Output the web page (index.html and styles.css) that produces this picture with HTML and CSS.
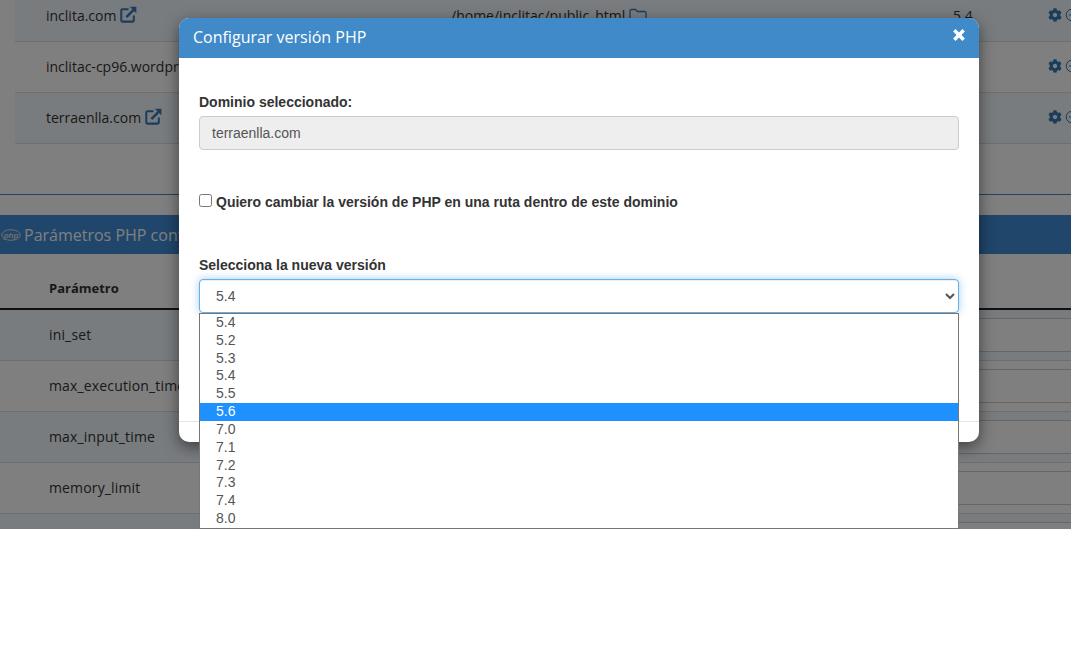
FILE: index.html
```html
<!DOCTYPE html>
<html lang="en">

<head>
    <meta charset="UTF-8">
    <meta name="viewport" content="width=device-width, initial-scale=1.0">
    <title>Configurar versión PHP</title>
    <link rel="stylesheet" href="styles.css">
</head>

<body>
    <svg class="defs" width="0" height="0">
        <symbol id="gear" viewBox="0 0 512 512">
            <path d="M487.4 315.7l-42.6-24.6c4.3-23.2 4.3-47 0-70.2l42.6-24.6c4.9-2.8 7.1-8.6 5.5-14-11.1-35.6-30-67.8-54.7-94.6-3.8-4.1-10-5.1-14.8-2.3L380.8 110c-17.9-15.4-38.5-27.3-60.8-35.1V25.8c0-5.6-3.9-10.5-9.4-11.7-36.7-8.2-74.3-7.8-109.2 0-5.5 1.2-9.4 6.1-9.4 11.7V75c-22.2 7.9-42.8 19.8-60.8 35.1L88.7 85.5c-4.9-2.8-11-1.9-14.8 2.3-24.7 26.7-43.6 58.9-54.7 94.6-1.7 5.4.6 11.2 5.5 14L67.3 221c-4.3 23.2-4.3 47 0 70.2l-42.6 24.6c-4.9 2.8-7.1 8.6-5.5 14 11.1 35.6 30 67.8 54.7 94.6 3.8 4.1 10 5.1 14.8 2.3l42.6-24.6c17.9 15.4 38.5 27.3 60.8 35.1v49.2c0 5.6 3.9 10.5 9.4 11.7 36.7 8.2 74.3 7.8 109.2 0 5.5-1.2 9.4-6.1 9.4-11.7v-49.2c22.2-7.9 42.8-19.8 60.8-35.1l42.6 24.6c4.9 2.8 11 1.9 14.8-2.3 24.7-26.7 43.6-58.9 54.7-94.6 1.5-5.5-.7-11.3-5.6-14.1zM256 336c-44.1 0-80-35.9-80-80s35.9-80 80-80 80 35.9 80 80-35.9 80-80 80z" fill="currentColor"/>
        </symbol>
        <symbol id="link" viewBox="0 0 16 16">
            <path d="M8 3H2.5A1.2 1.2 0 0 0 1.2 4.2v9.3a1.2 1.2 0 0 0 1.3 1.2h9.3a1.2 1.2 0 0 0 1.2-1.2V9" fill="none" stroke="currentColor" stroke-width="1.9"/>
            <path d="M6 10.5 13.5 3" fill="none" stroke="currentColor" stroke-width="2.4"/>
            <path d="M9.2 .6h6.2v6.2z" fill="currentColor"/>
        </symbol>
        <symbol id="circle" viewBox="0 0 14 14">
            <circle cx="7" cy="7" r="5.8" fill="none" stroke="currentColor" stroke-width="1"/>
            <path d="M4 7h6" stroke="currentColor" stroke-width="1"/>
        </symbol>
    </svg>

    <div class="page">
        <div class="sheet">
            <div class="domains">
                <div class="domain striped">
                    <div>inclita.com <svg class="icon-link"><use href="#link"/></svg></div>
                    <div>/home/inclitac/public_html
                        <svg class="icon-folder" viewBox="0 0 18 15">
                            <path d="M1 3a1.5 1.5 0 0 1 1.5-1.5h4l2 2h7A1.5 1.5 0 0 1 17 5v7.5a1.5 1.5 0 0 1-1.5 1.5h-13A1.5 1.5 0 0 1 1 12.500z" fill="none" stroke="currentColor" stroke-width="1.300"/>
                        </svg>
                    </div>
                    <div>5.4</div>
                    <div class="actions"><svg class="icon-gear"><use href="#gear"/></svg><svg class="icon-circle"><use href="#circle"/></svg></div>
                </div>
                <div class="domain">
                    <div>inclitac-cp96.wordpress.com</div>
                    <div></div>
                    <div></div>
                    <div class="actions"><svg class="icon-gear"><use href="#gear"/></svg><svg class="icon-circle"><use href="#circle"/></svg></div>
                </div>
                <div class="domain striped">
                    <div>terraenlla.com <svg class="icon-link"><use href="#link"/></svg></div>
                    <div></div>
                    <div></div>
                    <div class="actions"><svg class="icon-gear"><use href="#gear"/></svg><svg class="icon-circle"><use href="#circle"/></svg></div>
                </div>
            </div>

            <div class="params">
                <div class="params-title">
                    <svg class="icon-php" viewBox="0 0 20 12">
                        <ellipse cx="10" cy="6" rx="9.300" ry="5.300" fill="none" stroke="currentColor" stroke-width="1"/>
                        <text x="10" y="8.800" text-anchor="middle">php</text>
                    </svg>
                    Parámetros PHP configurables
                </div>
                <div class="params-head">Parámetro</div>
                <div class="param striped">
                    <div class="param-name">ini_set</div>
                    <div class="param-box"></div>
                </div>
                <div class="param">
                    <div class="param-name">max_execution_time</div>
                    <div class="param-box"></div>
                </div>
                <div class="param striped">
                    <div class="param-name">max_input_time</div>
                    <div class="param-box"></div>
                </div>
                <div class="param">
                    <div class="param-name">memory_limit</div>
                    <div class="param-box"></div>
                </div>
                <div class="param striped">
                    <div class="param-name"></div>
                    <div class="param-box"></div>
                </div>
            </div>
        </div>

        <div class="backdrop"></div>

        <div class="modal">
            <div class="modal-header">
                <span>Configurar versión PHP</span>
                <svg class="icon-close" viewBox="0 0 12 12">
                    <path d="M2 2l8 8M10 2l-8 8" stroke="currentColor" stroke-width="3"/>
                </svg>
            </div>
            <div class="modal-body">
                <label class="field-label" for="domain">Dominio seleccionado:</label>
                <input class="control control-off" id="domain" type="text" value="terraenlla.com" disabled>

                <label class="check-row">
                    <input type="checkbox">
                    Quiero cambiar la versión de PHP en una ruta dentro de este dominio
                </label>

                <label class="field-label field-version" for="version">Selecciona la nueva versión</label>
                <div class="select-wrap">
                    <select class="control control-focus" id="version">
                        <option>5.4</option>
                    </select>
                    <ul class="options">
                        <li>5.4</li>
                        <li>5.2</li>
                        <li>5.3</li>
                        <li>5.4</li>
                        <li>5.5</li>
                        <li class="selected">5.6</li>
                        <li>7.0</li>
                        <li>7.1</li>
                        <li>7.2</li>
                        <li>7.3</li>
                        <li>7.4</li>
                        <li>8.0</li>
                    </ul>
                </div>
            </div>
            <div class="modal-footer"></div>
        </div>
    </div>
</body>

</html>
```

FILE: styles.css
```css
* {
    margin: 0;
    padding: 0;
    box-sizing: border-box;
}

body {
    background-color: white;
    font-family: "Open Sans", sans-serif;
    font-size: 14px;
    color: #333;
}

.defs {
    display: block;
}

.page {
    position: relative;
    height: 529px;
    overflow: hidden;
}

.sheet {
    width: 1120px;
}

.backdrop {
    position: absolute;
    top: 0;
    left: 0;
    right: 0;
    bottom: 0;
    background-color: rgba(0, 0, 0, 0.5);
}

/* table of domains behind the modal */
.domains {
    margin-top: -9px;
    margin-left: 15px;
    margin-bottom: 50px;
}

.domain {
    display: grid;
    grid-template-columns: 405px 502px 95px 1fr;
    align-items: center;
    height: 51px;
    padding-left: 31px;
    padding-bottom: 2px;
    border-bottom: 1px solid #ddd;
}

.striped {
    background-color: #f3f9fe;
}

.icon-link {
    width: 17px;
    height: 17px;
    vertical-align: -2px;
    color: #337ab7;
}

.icon-folder {
    width: 18px;
    height: 15px;
    vertical-align: -2px;
    color: #337ab7;
}

.actions {
    display: flex;
    align-items: center;
    gap: 3px;
    color: #337ab7;
}

.icon-gear {
    width: 14px;
    height: 14px;
}

.icon-circle {
    width: 14px;
    height: 14px;
}

/* php parameters */
.params {
    border-top: 1px solid #3e8acc;
    padding-top: 20px;
}

.params-title {
    display: flex;
    align-items: center;
    gap: 3px;
    height: 39px;
    padding-left: 1px;
    background-color: #408cd6;
    color: #fff;
    font-size: 16px;
    white-space: nowrap;
}

.icon-php {
    width: 20px;
    height: 12px;
    color: #ddd;
}

.icon-php text {
    font-family: "Liberation Sans", sans-serif;
    font-size: 8px;
    font-weight: bold;
    font-style: italic;
    fill: currentColor;
}

.params-head {
    height: 56px;
    padding: 24px 0 0 49px;
    border-bottom: 2px solid #222;
    font-weight: bold;
    font-size: 13px;
    line-height: 20px;
}

.param {
    display: grid;
    grid-template-columns: 600px 1fr;
    align-items: center;
    height: 51px;
    padding-left: 49px;
    border-bottom: 1px solid #ddd;
}

.param-name {
    margin-bottom: 2px;
    letter-spacing: 0.15px;
}

.param-box {
    height: 34px;
    background-color: white;
    border: 1px solid #ccc;
}

/* modal */
.modal {
    position: absolute;
    top: 18px;
    left: 179px;
    width: 800px;
    border-radius: 10px;
    background-color: white;
    box-shadow: 0 5px 15px rgba(0, 0, 0, 0.5);
}

.modal-header {
    display: flex;
    justify-content: space-between;
    align-items: center;
    height: 40px;
    padding: 0 13px 2px 14px;
    border-radius: 10px 10px 0 0;
    background-color: #408ac9;
    color: white;
    font-size: 16px;
}

.icon-close {
    width: 14px;
    height: 14px;
    margin-top: -4px;
}

.modal-body {
    height: 364px;
    padding: 34px 20px 0;
    font-family: "Liberation Sans", sans-serif;
    border-bottom: 1px solid #e5e5e5;
}

.modal-footer {
    height: 20px;
}

.field-label {
    display: block;
    margin-bottom: 4px;
    font-size: 14px;
    font-weight: bold;
    line-height: 20px;
    color: #333;
}

.field-version {
    margin-top: 43px;
}

.control {
    display: block;
    width: 100%;
    height: 34px;
    padding: 6px 12px;
    border: 1px solid #ccc;
    border-radius: 4px;
    font-family: "Liberation Sans", sans-serif;
    font-size: 14px;
    color: #555;
    background-color: white;
}

.control-off {
    background-color: #eee;
}

.control-focus {
    border-color: #66afe9;
    outline: none;
    box-shadow: inset 0 1px 1px rgba(0, 0, 0, 0.075), 0 0 8px rgba(102, 175, 233, 0.6);
}

.check-row {
    display: flex;
    align-items: center;
    gap: 4px;
    margin-top: 42px;
    font-size: 14px;
    font-weight: bold;
    line-height: 20px;
    color: #333;
}

.check-row input {
    width: 13px;
    height: 13px;
    margin-top: -4px;
}

.select-wrap {
    position: relative;
}

.options {
    position: absolute;
    top: 34px;
    left: 0;
    width: 760px;
    list-style: none;
    background-color: white;
    border: 1px solid #767676;
    font-size: 14px;
    color: #555;
}

.options li {
    height: 17.83px;
    padding-left: 16px;
    line-height: 17.83px;
}

.options .selected {
    background-color: #1e90ff;
    color: white;
}
```
